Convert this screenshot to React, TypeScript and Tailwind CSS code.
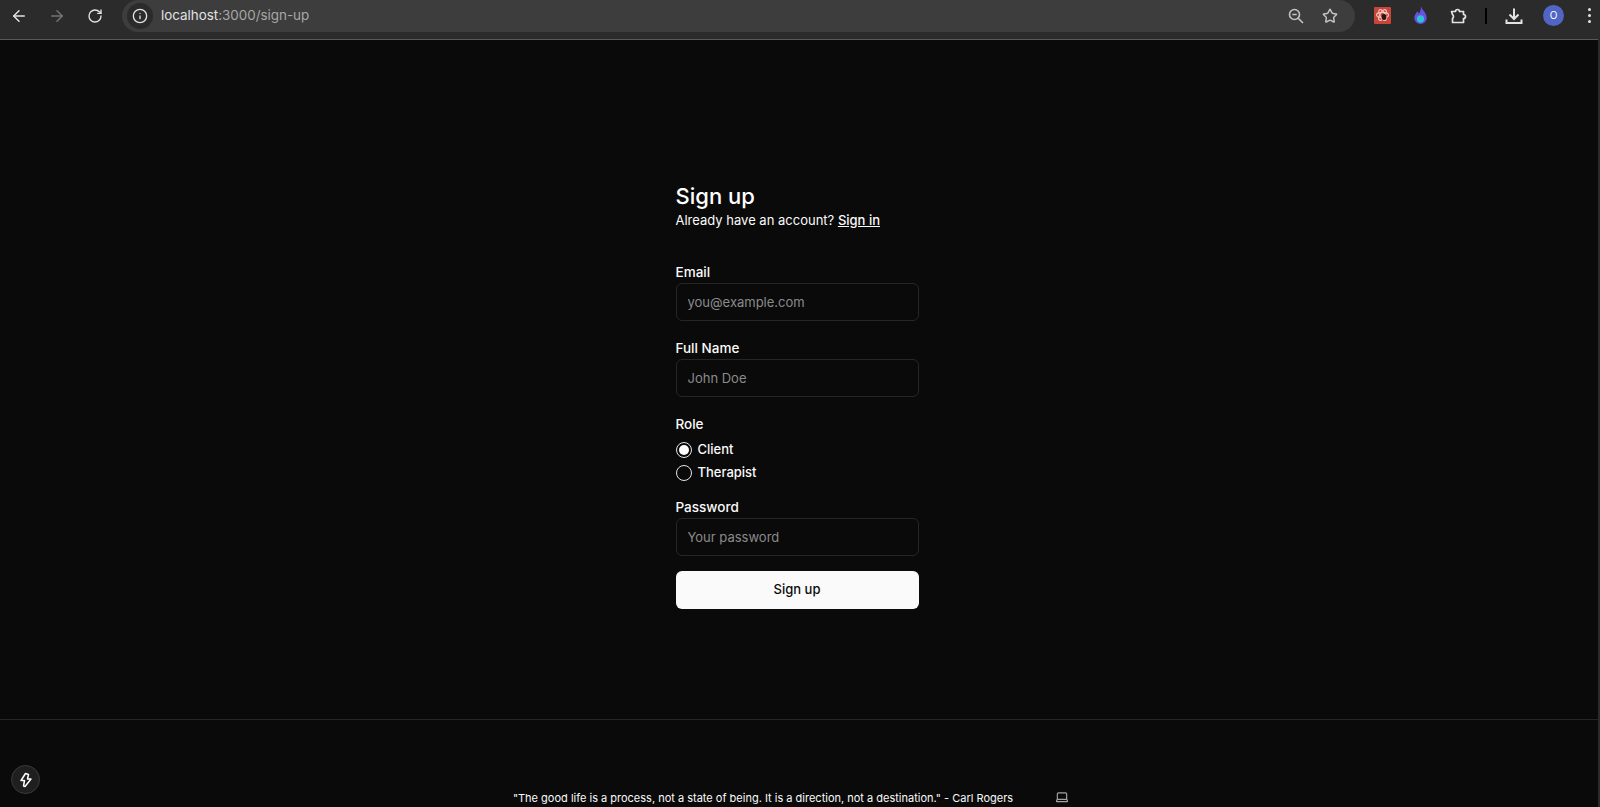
import { ArrowLeft, ArrowRight, RotateCw, Info, Star, Laptop } from "lucide-react";

const font = { fontFamily: "Inter, 'Liberation Sans', sans-serif" };

function Field({ label, placeholder, type = "text", className = "" }: { label: string; placeholder: string; type?: string; className?: string }) {
  return (
    <div className={`flex flex-col ${className}`}>
      <label className="mb-[1px] pt-[1px] text-[13.5px] leading-[20px] font-medium text-[#fafafa]">{label}</label>
      <input
        type={type}
        placeholder={placeholder}
        className="h-[38px] w-full rounded-md border border-[#262626] bg-transparent px-[11px] text-[13px] text-white placeholder:text-[#8a8a8a] outline-none"
      />
    </div>
  );
}

function Radio({ label, checked }: { label: string; checked?: boolean }) {
  return (
    <div className="flex h-[23px] items-center gap-[6px]">
      <span className="flex h-4 w-4 items-center justify-center rounded-full border border-[#e5e5e5]">
        {checked && <span className="h-[10px] w-[10px] rounded-full bg-white" />}
      </span>
      <span className="text-[13px] font-medium text-[#fafafa]">{label}</span>
    </div>
  );
}

export default function App() {
  return (
    <div className="flex h-screen flex-col overflow-hidden border-r-2 border-[#2b2b2b] bg-[#0a0a0a]" style={font}>
      {/* Browser toolbar */}
      <div className="flex h-10 shrink-0 items-center overflow-hidden border-b border-[#5a5a5a] bg-[#2b2b2b] pb-[8px] pl-[10px]">
        <div className="flex w-[112px] items-center gap-5 text-[#e3e3e3]">
          <ArrowLeft className="h-[18px] w-[18px]" />
          <ArrowRight className="h-[18px] w-[18px] text-[#747474]" />
          <RotateCw className="ml-[1px] h-4 w-4" />
        </div>
        <div className="flex h-8 w-[1233px] shrink-0 items-center rounded-full bg-[#3d3d3d] pl-[5px] pr-[17px]">
          <span className="flex h-[26px] w-[26px] items-center justify-center rounded-full bg-[#2b2b2b]">
            <Info className="h-4 w-4 text-[#e3e3e3]" />
          </span>
          <span className="ml-[8px] text-[13.4px] text-[#e3e3e3]">
            localhost<span className="text-[#a8a8a8]">:3000/sign-up</span>
          </span>
          <svg viewBox="0 0 18 18" fill="none" stroke="#c4c4c4" strokeWidth="1.6" className="ml-auto h-[18px] w-[18px]">
            <circle cx="7.5" cy="7.5" r="5" />
            <path d="M11.2 11.2 16 16M5.3 7.5h4.4" />
          </svg>
          <Star className="ml-[17px] h-4 w-4 text-[#c4c4c4]" strokeWidth={2.2} />
        </div>
        <svg viewBox="0 0 17 17" className="ml-[19px] h-[17px] w-[17px] shrink-0">
          <rect width="17" height="17" rx="1" fill="#c8453a" />
          <g fill="none" stroke="#f2c4bc" strokeWidth="1.2">
            <ellipse cx="8.5" cy="8" rx="6" ry="2.6" />
            <ellipse cx="8.5" cy="8" rx="6" ry="2.6" transform="rotate(60 8.5 8)" />
            <ellipse cx="8.5" cy="8" rx="6" ry="2.6" transform="rotate(120 8.5 8)" />
          </g>
          <ellipse cx="10" cy="10" rx="2.4" ry="3" fill="#2e1512" />
        </svg>
        <svg viewBox="0 0 15 20" className="ml-[22px] h-[19px] w-[15px] shrink-0">
          <path d="M8 0c.6 4 6 6.500 6 12.500a6.500 6.500 0 0 1-13 0c0-3 1.800-4.500 3-7 1 .8 1.500 1.600 2 2.500 1.200-2 2.200-4.500 2-8z" fill="#6a4fe0" />
          <circle cx="7.500" cy="13.500" r="3.800" fill="#2cc4d4" />
        </svg>
        <svg viewBox="0 0 18 18" fill="none" stroke="#e3e3e3" strokeWidth="1.700" strokeLinejoin="round" className="ml-[21px] h-[18px] w-[18px] shrink-0">
          <path d="M2.500 4.500H6.500a2 2 0 0 1 4 0H14.500V7.500a2 2 0 0 1 0 4V15.500H3.500V11.500a2.500 2.500 0 0 0 0-4z" />
        </svg>
        <span className="ml-[18px] h-4 w-[2px] shrink-0 bg-black" />
        <svg viewBox="0 0 18 18" fill="none" stroke="#e3e3e3" strokeWidth="2" className="ml-[18px] h-[18px] w-[18px] shrink-0">
          <path d="M9 1.500v10M4.500 7.500 9 12l4.500-4.500M1.500 12.500v3.500h15v-3.500" />
        </svg>
        <span className="ml-[20px] flex h-[21px] w-[21px] shrink-0 items-center justify-center rounded-full bg-[#5166c4] text-[10px] text-white">
          O
        </span>
        <span className="ml-[24px] flex shrink-0 flex-col gap-[3px]">
          <span className="h-[3px] w-[3px] rounded-full bg-[#e3e3e3]" />
          <span className="h-[3px] w-[3px] rounded-full bg-[#e3e3e3]" />
          <span className="h-[3px] w-[3px] rounded-full bg-[#e3e3e3]" />
        </span>
      </div>

      {/* Sign up form */}
      <main className="flex h-[679px] shrink-0 justify-center pt-[142px] pr-[4px]">
        <form className="flex w-[243px] flex-col">
          <h1 className="text-[22px] leading-[28px] font-medium text-white">Sign up</h1>
          <p className="text-[13px] leading-[20px] text-[#fafafa]">
            Already have an account? <a className="font-medium underline">Sign in</a>
          </p>
          <Field className="mt-[31px]" label="Email" placeholder="you@example.com" />
          <Field className="mt-4" label="Full Name" placeholder="John Doe" />
          <div className="mt-4 flex flex-col">
            <span className="mb-[4px] pt-[1px] text-[13.5px] leading-[20px] font-medium text-[#fafafa]">Role</span>
            <Radio label="Client" checked />
            <Radio label="Therapist" />
          </div>
          <Field className="mt-3" label="Password" placeholder="Your password" type="password" />
          <button type="button" className="mt-[15px] h-[38px] rounded-md bg-[#fafafa] text-[13px] font-medium text-[#0a0a0a]">
            Sign up
          </button>
        </form>
      </main>

      {/* Footer */}
      <footer className="flex shrink-0 justify-center gap-[42px] border-t border-[#262626] pt-[70px] pr-[16px]">
        <p className="text-[11px] leading-[16px] text-[#fafafa]">
          "The good life is a process, not a state of being. It is a direction, not a destination." - Carl Rogers
        </p>
        <Laptop className="h-[14px] w-[14px] text-[#a3a3a3]" />
      </footer>

      {/* Next.js dev indicator */}
      <div className="absolute bottom-[13px] left-[11px] flex h-[29px] w-[29px] items-center justify-center rounded-full border border-[#3a3a3a] bg-[#1f1f1f]">
        <svg viewBox="0 0 16 16" fill="none" stroke="#fff" strokeWidth="1.500" strokeLinejoin="round" className="h-4 w-4">
          <path d="M7.500 1.500 3 8.500h3.500L5.500 14l1.500.5 6-7.500H9.500l1-4.500z" />
        </svg>
      </div>
    </div>
  );
}
